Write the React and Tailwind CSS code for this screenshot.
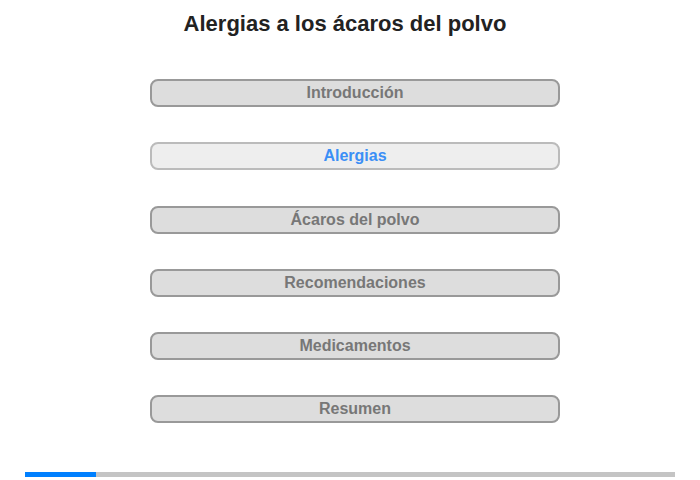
export default function App() {
  const items = ["Introducción", "Alergias", "Ácaros del polvo", "Recomendaciones", "Medicamentos", "Resumen"];
  return (
    <div className="w-[700px] h-[480px] bg-white relative" style={{ fontFamily: '"Liberation Sans", Arial, sans-serif' }}>
      <div className="pt-[11px] pr-[10px] text-center text-[22px] leading-[26px] font-bold text-[#222]">
        Alergias a los ácaros del polvo
      </div>
      <div className="flex flex-col gap-[35.3px] mt-[42px] pl-[150px]">
        {items.map((t, i) => (
          <div
            key={t}
            className={
              i === 1
                ? "w-[410px] h-[28px] rounded-[8px] border-2 border-[#bbb] bg-[#eee] text-[#3b8ff6] flex items-center justify-center text-[16px] font-bold"
                : "w-[410px] h-[28px] rounded-[8px] border-2 border-[#999] bg-[#ddd] text-[#777] flex items-center justify-center text-[16px] font-bold"
            }
          >
            {t}
          </div>
        ))}
      </div>
      <div className="absolute left-[25px] top-[472px] w-[650px] h-[5px] bg-[#c4c4c4] flex">
        <div className="w-[71px] h-full bg-[#0080ff]" />
      </div>
    </div>
  );
}
